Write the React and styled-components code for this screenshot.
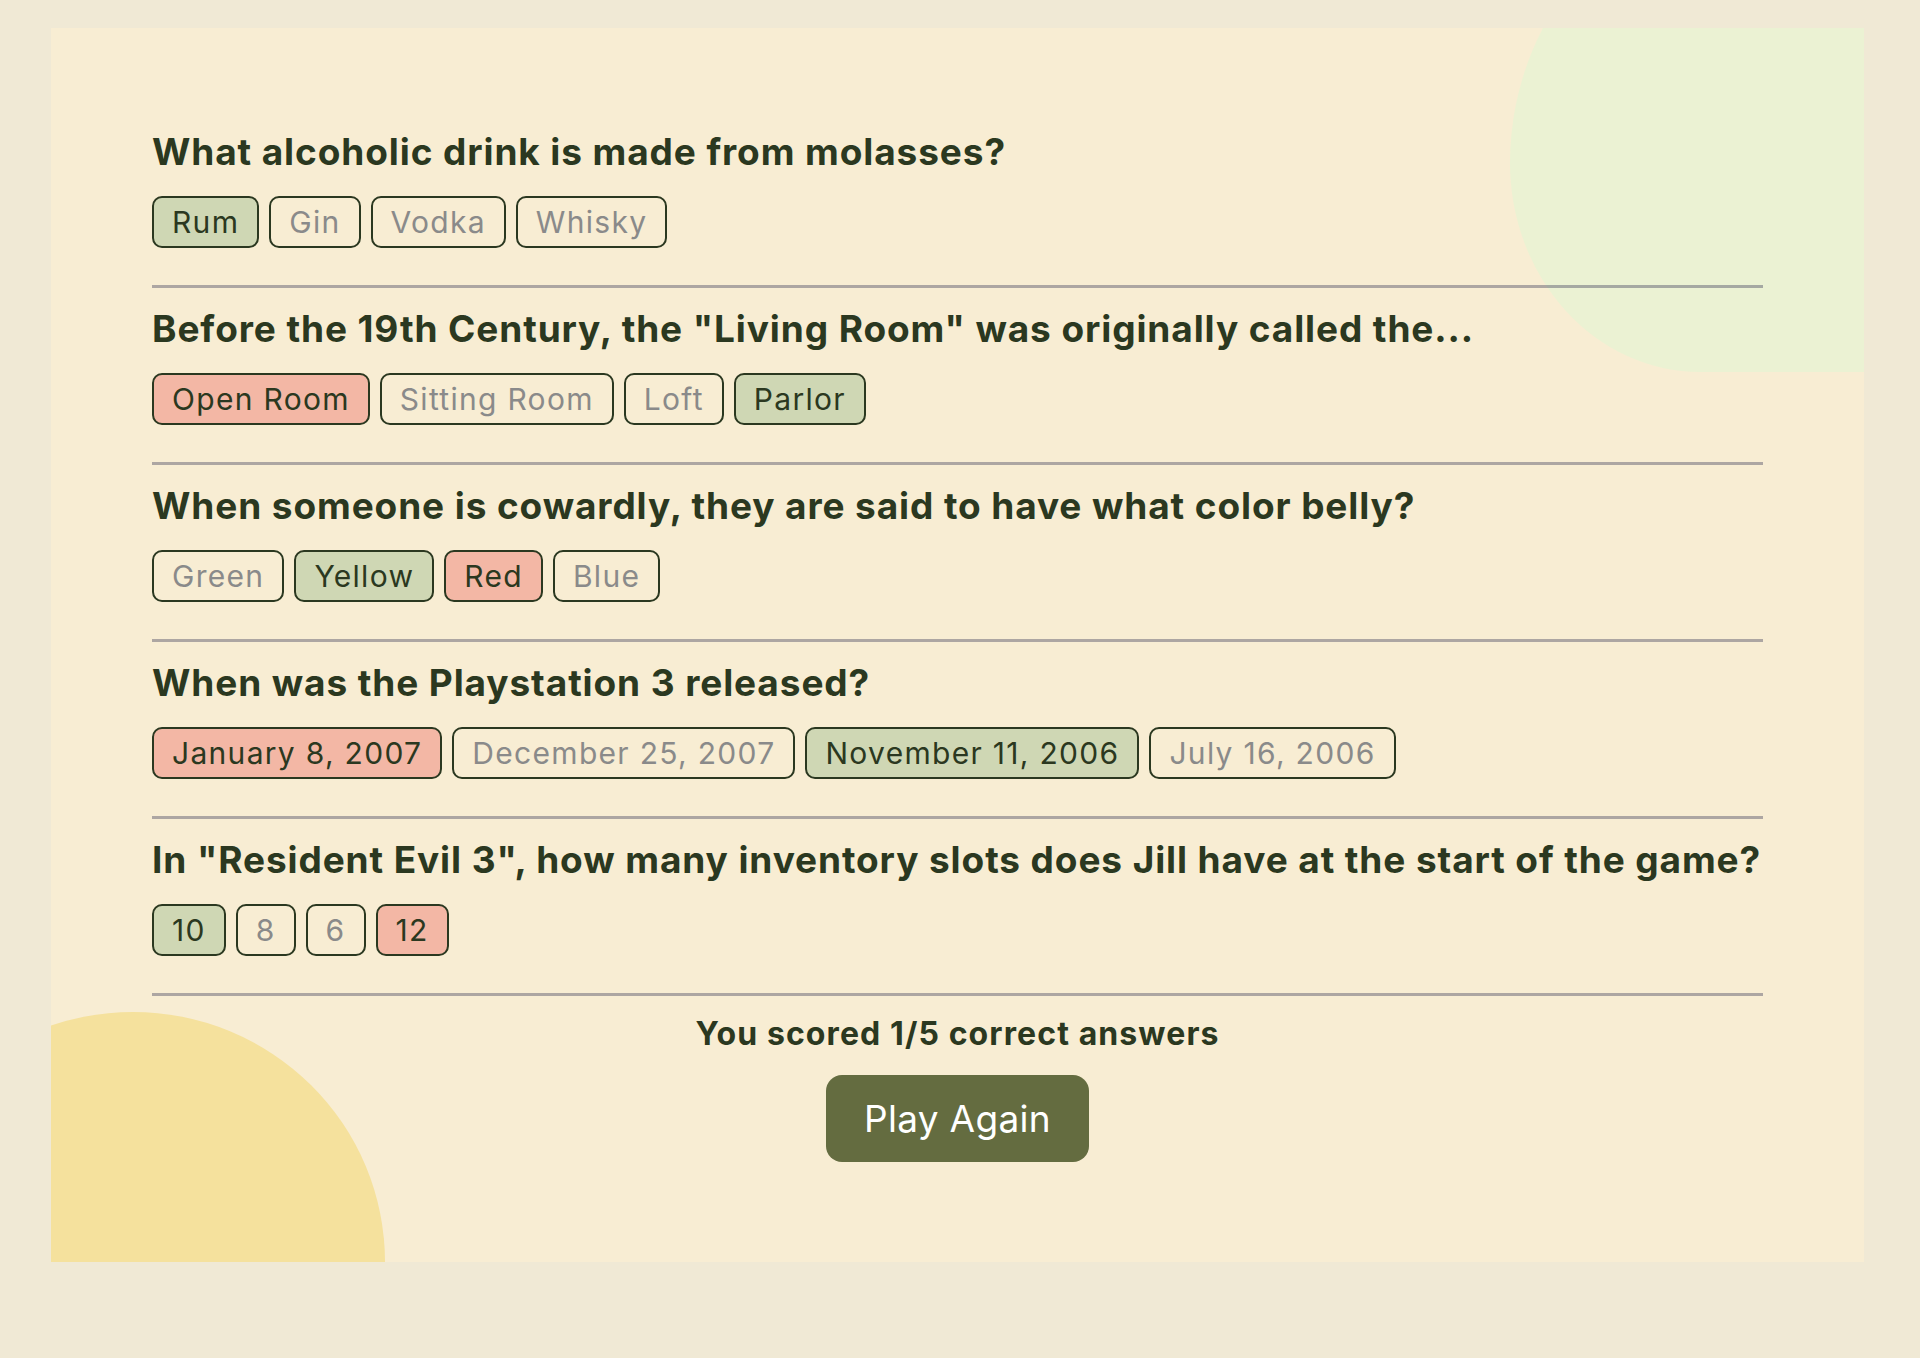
import React from "react";
import styled, { createGlobalStyle } from "styled-components";

const GlobalStyle = createGlobalStyle`
  html, body { margin: 0; padding: 0; }
  body {
    background: #F0E9D5;
    font-family: "Inter", "Liberation Sans", sans-serif;
    color: #2B3820;
  }
`;

const Page = styled.div`
  padding: 28px 56px 96px 51px;
`;

const Card = styled.main`
  position: relative;
  overflow: hidden;
  background: #F8EDD3;
  padding: 102px 101px 100px 101px;
`;

const GreenBlob = styled.div`
  position: absolute;
  left: 1459px;
  top: -158px;
  width: 600px;
  height: 502px;
  background: #EBF2D3;
  border-radius: 293px 0 0 190px / 293px 0 0 209px;
  z-index: 0;
`;

const YellowBlob = styled.div`
  position: absolute;
  left: -170px;
  top: 984px;
  width: 504px;
  height: 500px;
  background: #F5E19D;
  border-radius: 50%;
  z-index: 0;
`;

const Content = styled.div`
  position: relative;
  z-index: 1;
`;

const Question = styled.section`
  display: flex;
  flex-direction: column;
`;

const Title = styled.h2`
  margin: 0;
  font-size: 37px;
  line-height: 44px;
  font-weight: 700;
  letter-spacing: 0.9px;
  color: #2B3820;
`;

const Answers = styled.div`
  display: flex;
  flex-wrap: wrap;
  gap: 10px;
  margin-top: 22px;
`;

const Answer = styled.span`
  display: inline-block;
  box-sizing: border-box;
  height: 52px;
  padding: 6px 18px;
  border: 2px solid #2B3820;
  border-radius: 10px;
  font-size: 30px;
  line-height: 36px;
  font-weight: 400;
  letter-spacing: 1.3px;
  color: ${(p) => (p.$state === "none" ? "#8A8A8A" : "#2B3820")};
  background: ${(p) =>
    p.$state === "correct" ? "#CFD7B4" : p.$state === "wrong" ? "#F3B7A5" : "transparent"};
`;

const Divider = styled.hr`
  margin: 37px 0 19px;
  border: none;
  height: 3px;
  background: rgba(70, 70, 95, 0.42);
`;

const Footer = styled.div`
  display: flex;
  flex-direction: column;
  align-items: center;
`;

const Score = styled.p`
  margin: 0;
  font-size: 32px;
  line-height: 38px;
  font-weight: 700;
  letter-spacing: 1.1px;
  color: #2B3820;
`;

const PlayButton = styled.button`
  margin-top: 22px;
  height: 87px;
  padding: 0 38px;
  border: none;
  border-radius: 16px;
  background: #646C40;
  color: #FFFFFF;
  font-family: "Inter", "Liberation Sans", sans-serif;
  font-size: 37px;
  font-weight: 400;
  letter-spacing: 0.3px;
  cursor: pointer;
`;

const questions = [
  {
    q: "What alcoholic drink is made from molasses?",
    answers: [
      ["Rum", "correct"],
      ["Gin", "none"],
      ["Vodka", "none"],
      ["Whisky", "none"],
    ],
  },
  {
    q: 'Before the 19th Century, the "Living Room" was originally called the...',
    answers: [
      ["Open Room", "wrong"],
      ["Sitting Room", "none"],
      ["Loft", "none"],
      ["Parlor", "correct"],
    ],
  },
  {
    q: "When someone is cowardly, they are said to have what color belly?",
    answers: [
      ["Green", "none"],
      ["Yellow", "correct"],
      ["Red", "wrong"],
      ["Blue", "none"],
    ],
  },
  {
    q: "When was the Playstation 3 released?",
    answers: [
      ["January 8, 2007", "wrong"],
      ["December 25, 2007", "none"],
      ["November 11, 2006", "correct"],
      ["July 16, 2006", "none"],
    ],
  },
  {
    q: 'In "Resident Evil 3", how many inventory slots does Jill have at the start of the game?',
    answers: [
      ["10", "correct"],
      ["8", "none"],
      ["6", "none"],
      ["12", "wrong"],
    ],
  },
];

export default function App() {
  return (
    <>
      <GlobalStyle />
      <Page>
        <Card>
          <GreenBlob />
          <YellowBlob />
          <Content>
            {questions.map((item) => (
              <Question key={item.q}>
                <Title>{item.q}</Title>
                <Answers>
                  {item.answers.map(([label, state]) => (
                    <Answer key={label} $state={state}>
                      {label}
                    </Answer>
                  ))}
                </Answers>
                <Divider />
              </Question>
            ))}
            <Footer>
              <Score>You scored 1/5 correct answers</Score>
              <PlayButton>Play Again</PlayButton>
            </Footer>
          </Content>
        </Card>
      </Page>
    </>
  );
}
